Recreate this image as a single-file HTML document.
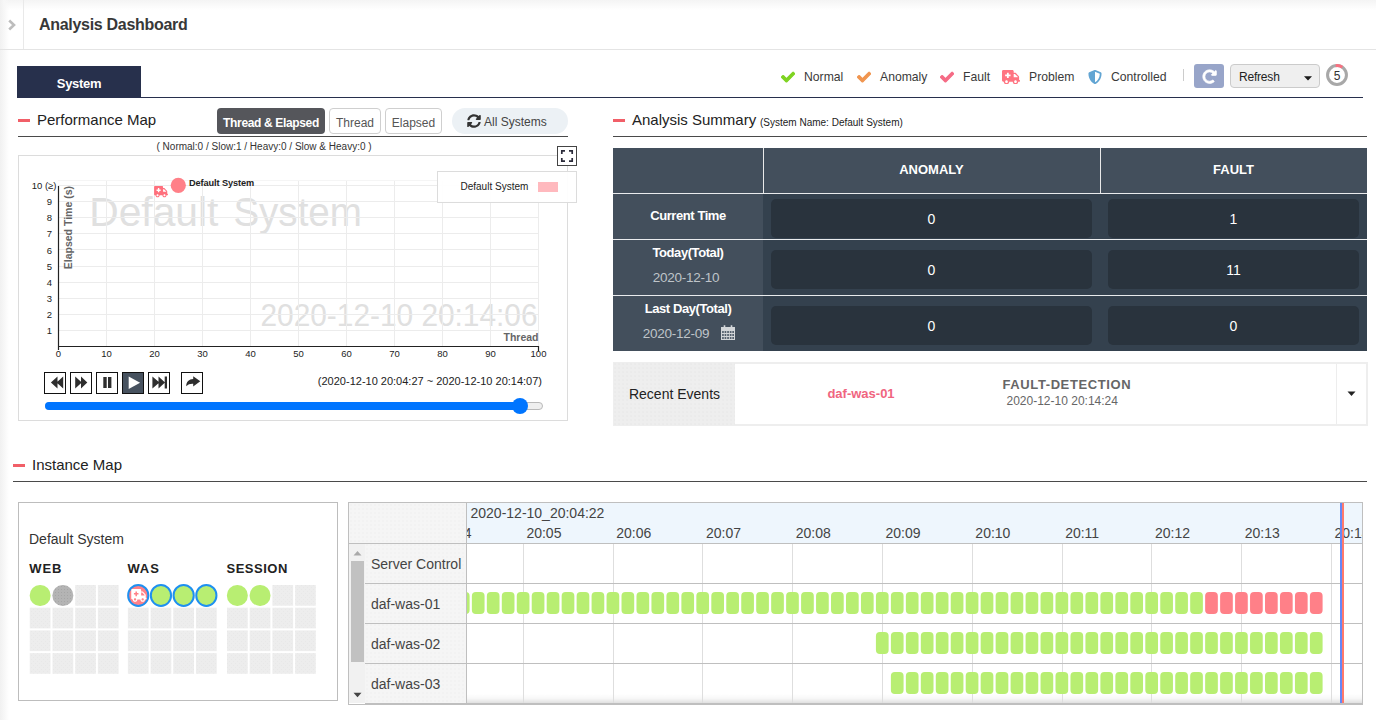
<!DOCTYPE html>
<html lang="en">
<head>
<meta charset="utf-8">
<title>Analysis Dashboard</title>
<style>
*{box-sizing:border-box;margin:0;padding:0}
html,body{width:1376px;height:720px;overflow:hidden;background:#fff}
body{font-family:"Liberation Sans",sans-serif;color:#333;position:relative}
.abs{position:absolute}
.t{position:absolute;white-space:nowrap;line-height:1}
.c{transform:translateX(-50%)}
.r{transform:translateX(-100%)}
/* shadows */
#shTop{left:0;top:0;width:1376px;height:10px;background:linear-gradient(#f4f4f4,#f9f9f9 45%,#fff)}
#shLeft{left:0;top:0;width:9px;height:720px;background:linear-gradient(90deg,#f1f1f1,#f7f7f7 45%,rgba(255,255,255,0))}
#hdrV{left:23px;top:0;width:1px;height:50px;background:#e9e9e9}
#hdrH{left:0;top:49px;width:1376px;height:1px;background:#e4e4e4}
#title{left:39px;top:17.200px;font-size:16px;font-weight:bold;color:#383838;letter-spacing:-0.3px}
/* tab */
#tab{left:17px;top:66px;width:124px;height:32px;background:#27304c;color:#fff;font-weight:bold;font-size:13px;text-align:center;line-height:36px;letter-spacing:-0.3px}
#tabLine{left:17px;top:97px;width:1346px;height:1px;background:#272f4d}
.lg{font-size:12.200px;color:#3a3a3a;top:71px}
/* section titles */
.dash{height:3px;width:12px;background:#f15f68}
.sec{font-size:15px;color:#222}
.hr{height:1px;background:#4a4a4a}
.vb{height:39px;background:#29333d;border-radius:5px}
.vv{font-size:14px;color:#fff}
.rl{font-size:13px;font-weight:bold;color:#fff;letter-spacing:-0.42px;margin-top:-0.5px}
.rd{font-size:13.500px;color:#bfc4c9;letter-spacing:-0.27px;margin-top:-0.5px}
.pb{top:372px;width:22px;height:22px;border:1px solid #111;background:#fff}
</style>
</head>
<body>
<div class="abs" id="shTop"></div>
<div class="abs" id="shLeft"></div>
<div class="abs" id="hdrV"></div>
<div class="abs" id="hdrH"></div>
<svg class="abs" style="left:8px;top:19px" width="9" height="12" viewBox="0 0 9 12"><path d="M1.2 1.5 L6 6 L1.2 10.5" fill="none" stroke="#bdbdbd" stroke-width="2.6"/></svg>
<div class="t" id="title">Analysis Dashboard</div>

<div class="abs" id="tab">System</div>
<div class="abs" id="tabLine"></div>

<!-- status legend -->
<svg class="abs" style="left:780.9px;top:69.900px" width="14.200" height="14.200" viewBox="-20 -20 552 552"><path fill="#7ed321" stroke="#7ed321" stroke-width="40" stroke-linejoin="round" d="M173.898 439.404l-166.400-166.400c-9.997-9.997-9.997-26.206 0-36.204l36.203-36.204c9.997-9.998 26.207-9.998 36.204 0L192 312.690 432.095 72.596c9.997-9.997 26.207-9.997 36.204 0l36.203 36.204c9.997 9.997 9.997 26.206 0 36.204l-294.400 294.401c-9.998 9.997-26.207 9.997-36.204-.001z"/></svg>
<div class="t lg" style="left:804px">Normal</div>
<svg class="abs" style="left:856.9px;top:69.900px" width="14.200" height="14.200" viewBox="-20 -20 552 552"><path fill="#f0954f" stroke="#f0954f" stroke-width="40" stroke-linejoin="round" d="M173.898 439.404l-166.400-166.400c-9.997-9.997-9.997-26.206 0-36.204l36.203-36.204c9.997-9.998 26.207-9.998 36.204 0L192 312.690 432.095 72.596c9.997-9.997 26.207-9.997 36.204 0l36.203 36.204c9.997 9.997 9.997 26.206 0 36.204l-294.400 294.401c-9.998 9.997-26.207 9.997-36.204-.001z"/></svg>
<div class="t lg" style="left:880px">Anomaly</div>
<svg class="abs" style="left:939.9px;top:69.900px" width="14.200" height="14.200" viewBox="-20 -20 552 552"><path fill="#f56b85" stroke="#f56b85" stroke-width="40" stroke-linejoin="round" d="M173.898 439.404l-166.400-166.400c-9.997-9.997-9.997-26.206 0-36.204l36.203-36.204c9.997-9.998 26.207-9.998 36.204 0L192 312.690 432.095 72.596c9.997-9.997 26.207-9.997 36.204 0l36.203 36.204c9.997 9.997 9.997 26.206 0 36.204l-294.400 294.401c-9.998 9.997-26.207 9.997-36.204-.001z"/></svg>
<div class="t lg" style="left:963px">Fault</div>
<svg class="abs" style="left:1001.5px;top:70px" width="18" height="14.400" viewBox="0 0 640 512"><path fill="#ff7481" d="M624 352h-16V243.900c0-12.700-5.100-24.900-14.100-33.900L494 110.100c-9-9-21.200-14.100-33.900-14.100H416V48c0-26.500-21.500-48-48-48H48C21.500 0 0 21.500 0 48v320c0 26.500 21.500 48 48 48h16c0 53 43 96 96 96s96-43 96-96h128c0 53 43 96 96 96s96-43 96-96h48c8.800 0 16-7.200 16-16v-32c0-8.800-7.200-16-16-16zM160 464c-26.500 0-48-21.500-48-48s21.500-48 48-48 48 21.500 48 48-21.500 48-48 48zm144-248c0 4.400-3.600 8-8 8h-56v56c0 4.400-3.600 8-8 8h-48c-4.400 0-8-3.600-8-8v-56h-56c-4.400 0-8-3.600-8-8v-48c0-4.400 3.600-8 8-8h56v-56c0-4.400 3.600-8 8-8h48c4.400 0 8 3.600 8 8v56h56c4.400 0 8 3.600 8 8v48zm176 248c-26.500 0-48-21.500-48-48s21.500-48 48-48 48 21.500 48 48-21.500 48-48 48zm80-208H416V144h44.100l99.900 99.900V256z"/></svg>
<div class="t lg" style="left:1029px">Problem</div>
<svg class="abs" style="left:1087.5px;top:70px" width="14" height="14" viewBox="0 0 512 512"><path fill="#62a5d3" d="M466.500 83.700l-192-80a48.150 48.150 0 0 0-36.900 0l-192 80C27.700 91.100 16 108.600 16 128c0 198.500 114.500 335.700 221.500 380.300 11.800 4.900 25.100 4.900 36.900 0C360.100 472.600 496 349.300 496 128c0-19.400-11.700-36.900-29.500-44.300zM256.100 446.300l-.1-381 175.900 73.300c-3.300 151.400-82.100 261.100-175.800 307.700z"/></svg>
<div class="t lg" style="left:1111px">Controlled</div>
<div class="abs" style="left:1183px;top:69px;width:1px;height:12px;background:#ccc"></div>
<div class="abs" style="left:1194px;top:64px;width:30px;height:24px;background:#98a5c9;border-radius:3px"></div>
<svg class="abs" style="left:1201.500px;top:69.300px" width="15.200" height="15.200" viewBox="-20 -20 552 552"><path fill="#fff" stroke="#fff" stroke-width="24" stroke-linejoin="round" d="M256.455 8c66.269.119 126.437 26.233 170.859 68.685l35.715-35.715C478.149 25.851 504 36.559 504 57.941V192c0 13.255-10.745 24-24 24H345.941c-21.382 0-32.090-25.851-16.971-40.971l41.750-41.750c-30.864-28.899-70.801-44.907-113.230-45.273-92.398-.798-170.283 73.977-169.484 169.442C88.764 348.009 162.184 424 256 424c41.127 0 79.997-14.678 110.629-41.556 4.743-4.161 11.906-3.908 16.368.553l39.662 39.662c4.872 4.872 4.631 12.815-.482 17.433C378.202 479.813 319.926 504 256 504 119.034 504 8.001 392.967 8 256.002 7.999 119.193 119.646 7.755 256.455 8z"/></svg>
<div class="abs" style="left:1230px;top:64px;width:90px;height:24px;background:#efefef;border:1px solid #cbcbcb;border-radius:4px"></div>
<div class="t" style="left:1239px;top:70.700px;font-size:12px;color:#222;letter-spacing:-0.2px">Refresh</div>
<svg class="abs" style="left:1304px;top:75.700px" width="8" height="5" viewBox="0 0 8 5"><path d="M0 0.200H8L4 4.500Z" fill="#1a1a1a"/></svg>
<svg class="abs" style="left:1325.100px;top:63px" width="24" height="24" viewBox="0 0 24 24"><circle cx="12" cy="12" r="9.45" fill="#fff" stroke="#a8a8a8" stroke-width="3"/><path d="M10.68 2.64 A9.45 9.45 0 0 1 17.28 4.17" fill="none" stroke="#fa7080" stroke-width="3"/></svg>
<div class="t c" style="left:1337px;top:69.700px;font-size:12px;color:#333">5</div>

<!-- ===== Performance Map ===== -->
<div class="abs dash" style="left:18px;top:119px"></div>
<div class="t sec" style="left:37px;top:112px">Performance Map</div>
<div class="abs" style="left:217px;top:108.300px;width:108px;height:25.300px;background:#55565b;border-radius:4px"></div>
<div class="t c" style="left:271px;top:116.700px;font-size:12px;font-weight:bold;color:#fff;letter-spacing:-0.35px">Thread &amp; Elapsed</div>
<div class="abs" style="left:329px;top:108.300px;width:52px;height:25.300px;background:#fff;border:1px solid #cfcfcf;border-radius:4px"></div>
<div class="t c" style="left:355px;top:116.700px;font-size:12px;color:#555">Thread</div>
<div class="abs" style="left:385px;top:108.300px;width:57px;height:25.300px;background:#fff;border:1px solid #cfcfcf;border-radius:4px"></div>
<div class="t c" style="left:413.500px;top:116.700px;font-size:12px;color:#555">Elapsed</div>
<div class="abs" style="left:452px;top:108px;width:116px;height:26px;background:#ecf1f5;border-radius:13px"></div>
<svg class="abs" style="left:467px;top:114px" width="14" height="14" viewBox="0 0 512 512"><path fill="#333" d="M370.72 133.28C339.458 104.008 298.888 87.962 255.848 88c-77.458.068-144.328 53.178-162.791 126.850-1.344 5.363-6.122 9.150-11.651 9.150H24.103c-7.498 0-13.194-6.807-11.807-14.176C33.933 94.924 134.813 8 256 8c66.448 0 126.791 26.136 171.315 68.685L463.030 40.970C478.149 25.851 504 36.559 504 57.941V192c0 13.255-10.745 24-24 24H345.941c-21.382 0-32.090-25.851-16.971-40.971l41.750-41.749zM32 296h134.059c21.382 0 32.090 25.851 16.971 40.971l-41.750 41.750c31.262 29.273 71.835 45.319 114.876 45.280 77.418-.070 144.315-53.144 162.787-126.849 1.344-5.363 6.122-9.150 11.651-9.150h57.304c7.498 0 13.194 6.807 11.807 14.176C478.067 417.076 377.187 504 256 504c-66.448 0-126.791-26.136-171.315-68.685L48.970 471.030C33.851 486.149 8 475.441 8 454.059V320c0-13.255 10.745-24 24-24z"/></svg>
<div class="t" style="left:484px;top:116px;font-size:12px;color:#444">All Systems</div>
<div class="abs hr" style="left:18px;top:136px;width:550px"></div>
<div class="t" style="left:156.500px;top:141.500px;font-size:10px;color:#333">( Normal:0 / Slow:1 / Heavy:0 / Slow &amp; Heavy:0 )</div>

<div class="abs" style="left:18px;top:155px;width:550px;height:266px;border:1px solid #dcdcdc;background:#fff"></div>

<svg class="abs" style="left:0;top:140px" width="600" height="290" viewBox="0 140 600 290" font-family="Liberation Sans, sans-serif">
 <text x="89.200" y="225.800" font-size="40" fill="#e0e0e0"><tspan textLength="129.200" lengthAdjust="spacingAndGlyphs">Default</tspan> <tspan x="233.400" textLength="128.500" lengthAdjust="spacingAndGlyphs">System</tspan></text>
 <text x="260.500" y="326.300" font-size="32" fill="#e0e0e0" textLength="277" lengthAdjust="spacingAndGlyphs">2020-12-10 20:14:06</text>
 <g stroke="#ececec" stroke-width="1" shape-rendering="crispEdges">
  <path d="M106.5 180V346M154.5 180V346M202.5 180V346M250.5 180V346M298.5 180V346M346.5 180V346M394.5 180V346M442.5 180V346M490.5 180V346M538.5 180V346"/>
  <path stroke="#f5f5f5" d="M58 180.500H538.500"/><path d="M58 185.500H538.500M58 201.500H538.500M58 217.500H538.500M58 233.500H538.500M58 249.500H538.500M58 266.500H538.500M58 282.500H538.500M58 298.500H538.500M58 314.500H538.500M58 330.500H538.500"/>
 </g>
 <g stroke="#222" stroke-width="1.200" fill="none">
  <path d="M58.500 186V350M58 346.500H538.500M538.500 346V351"/>
 </g>
 <g font-size="9.500" fill="#222" text-anchor="end" transform="translate(0 0.200)">
  <text x="56.500" y="189">10 (≥)</text>
  <text x="52" y="205">9</text>
  <text x="52" y="221">8</text>
  <text x="52" y="237">7</text>
  <text x="52" y="253.500">6</text>
  <text x="52" y="269.500">5</text>
  <text x="52" y="285.500">4</text>
  <text x="52" y="301.500">3</text>
  <text x="52" y="318">2</text>
  <text x="52" y="334">1</text>
 </g>
 <g font-size="9.500" fill="#222" text-anchor="middle">
  <text x="58.500" y="357">0</text>
  <text x="106.500" y="357">10</text>
  <text x="154.500" y="357">20</text>
  <text x="202.500" y="357">30</text>
  <text x="250.500" y="357">40</text>
  <text x="298.500" y="357">50</text>
  <text x="346.500" y="357">60</text>
  <text x="394.500" y="357">70</text>
  <text x="442.500" y="357">80</text>
  <text x="490.500" y="357">90</text>
  <text x="538.500" y="357">100</text>
 </g>
 <text transform="translate(71.500 186) rotate(-90)" text-anchor="end" font-size="10.500" font-weight="bold" fill="#666">Elapsed Time (s)</text>
 <text x="538.500" y="340.500" text-anchor="end" font-size="10.500" font-weight="bold" fill="#666">Thread</text>
 <circle cx="178.300" cy="185.300" r="7.600" fill="#ff8088"/>
 <text x="189" y="185.700" font-size="9.200" font-weight="bold" fill="#222" letter-spacing="-0.1">Default System</text>
 <g transform="translate(154.100 186) scale(0.0216 0.0221)"><path fill="#ff6f7c" d="M624 352h-16V243.900c0-12.700-5.100-24.900-14.100-33.900L494 110.100c-9-9-21.200-14.100-33.900-14.100H416V48c0-26.500-21.500-48-48-48H48C21.500 0 0 21.500 0 48v320c0 26.500 21.500 48 48 48h16c0 53 43 96 96 96s96-43 96-96h128c0 53 43 96 96 96s96-43 96-96h48c8.800 0 16-7.200 16-16v-32c0-8.800-7.200-16-16-16zM160 464c-26.500 0-48-21.500-48-48s21.500-48 48-48 48 21.500 48 48-21.500 48-48 48zm144-248c0 4.400-3.600 8-8 8h-56v56c0 4.400-3.600 8-8 8h-48c-4.400 0-8-3.600-8-8v-56h-56c-4.400 0-8-3.600-8-8v-48c0-4.400 3.600-8 8-8h56v-56c0-4.400 3.600-8 8-8h48c4.400 0 8 3.600 8 8v56h56c4.400 0 8 3.600 8 8v48zm176 248c-26.500 0-48-21.500-48-48s21.500-48 48-48 48 21.500 48 48-21.500 48-48 48zm80-208H416V144h44.100l99.900 99.900V256z"/></g>
</svg>

<!-- legend box -->
<div class="abs" style="left:437px;top:171px;width:140px;height:32px;border:1px solid #dcdcdc;background:rgba(255,255,255,0.92)"></div>
<div class="t" style="left:460.500px;top:182px;font-size:10px;color:#222">Default System</div>
<div class="abs" style="left:538px;top:182px;width:20px;height:10px;background:#ffb9be"></div>
<!-- fullscreen -->
<div class="abs" style="left:557px;top:146px;width:20px;height:20px;border:1px solid #444;background:#fff"></div>
<svg class="abs" style="left:557px;top:146px" width="20" height="20" viewBox="0 0 20 20"><path d="M4.800 8V4.800H8M12 4.800H15.200V8M15.200 12V15.200H12M8 15.200H4.800V12" fill="none" stroke="#2b2b3a" stroke-width="1.700"/></svg>

<!-- player buttons -->
<div class="abs pb" style="left:44px"></div>
<div class="abs pb" style="left:70px"></div>
<div class="abs pb" style="left:96px"></div>
<div class="abs pb" style="left:122px;background:#47525f"></div>
<div class="abs pb" style="left:148px"></div>
<div class="abs pb" style="left:181px"></div>
<svg class="abs" style="left:44px;top:372px" width="160" height="22" viewBox="0 0 160 22">
 <g fill="#2e2e2e">
  <path d="M13.500 4.400V16.500L6.900 10.450ZM19.200 4.400V16.500L12.600 10.450Z"/>
  <path d="M31.200 4.400V16.500L37.800 10.450ZM37 4.400V16.500L43.300 10.450Z"/>
  <path d="M59.300 5H62.700V15.900H59.300ZM64 5H67.400V15.900H64Z"/>
  <path d="M108.400 4.400V16.500L115.400 10.450ZM114.500 4.400V16.500L121 10.450ZM120.700 4.400H123V16.500H120.700Z"/>
 </g>
 <path d="M84.700 4.400V17.100L96.100 10.750Z" fill="#fff"/>
 <path fill="#2e2e2e" d="M149.200 4.200L156.300 9.300L149.200 14.400V11.700C146.500 11.500 144 12.200 142.200 14.300C142.200 10 145 7.300 149.200 7.100Z"/>
</svg>
<div class="t r" style="left:542px;top:376px;font-size:11px;color:#222">(2020-12-10 20:04:27 ~ 2020-12-10 20:14:07)</div>
<!-- slider -->
<div class="abs" style="left:45px;top:402px;width:498px;height:8px;border-radius:4px;background:#efefef;border:1px solid #b9b9b9"></div>
<div class="abs" style="left:45px;top:402px;width:477px;height:8px;border-radius:4px;background:#0075ff"></div>
<div class="abs" style="left:511.700px;top:398.400px;width:16px;height:16px;border-radius:8px;background:#0075ff"></div>
<!-- ===== Analysis Summary ===== -->
<div class="abs dash" style="left:613px;top:119px"></div>
<div class="t sec" style="left:632px;top:112px">Analysis Summary</div>
<div class="t" style="left:760px;top:117.500px;font-size:10px;color:#222">(System Name: Default System)</div>
<div class="abs hr" style="left:613px;top:136px;width:754px"></div>

<div class="abs" style="left:613px;top:148px;width:754px;height:203px;background:#34414e"></div>
<!-- header row + first column -->
<div class="abs" style="left:613px;top:148px;width:754px;height:45px;background:#434f5c"></div>
<div class="abs" style="left:613px;top:148px;width:150px;height:203px;background:#434f5c"></div>
<!-- white separators -->
<div class="abs" style="left:763px;top:148px;width:1px;height:45px;background:#e9e9e9"></div>
<div class="abs" style="left:1100px;top:148px;width:1px;height:45px;background:#e9e9e9"></div>
<div class="abs" style="left:613px;top:193px;width:754px;height:1px;background:#e9ebed"></div>
<div class="abs" style="left:613px;top:239px;width:754px;height:1px;background:#e9ebed"></div>
<div class="abs" style="left:613px;top:295px;width:754px;height:1px;background:#e9ebed"></div>
<div class="t c" style="left:931.5px;top:162.500px;font-size:13px;font-weight:bold;color:#fff">ANOMALY</div>
<div class="t c" style="left:1233.5px;top:162.500px;font-size:13px;font-weight:bold;color:#fff">FAULT</div>
<!-- value boxes -->
<div class="abs vb" style="left:771px;top:199px;width:321px"></div>
<div class="abs vb" style="left:1108px;top:199px;width:251px"></div>
<div class="abs vb" style="left:771px;top:250px;width:321px"></div>
<div class="abs vb" style="left:1108px;top:250px;width:251px"></div>
<div class="abs vb" style="left:771px;top:306px;width:321px"></div>
<div class="abs vb" style="left:1108px;top:306px;width:251px"></div>
<div class="t c vv" style="left:931.5px;top:211.500px">0</div>
<div class="t c vv" style="left:1233.5px;top:211.500px">1</div>
<div class="t c vv" style="left:931.5px;top:262.500px">0</div>
<div class="t c vv" style="left:1233.5px;top:262.500px">11</div>
<div class="t c vv" style="left:931.5px;top:318.500px">0</div>
<div class="t c vv" style="left:1233.5px;top:318.500px">0</div>
<!-- row labels -->
<div class="t c rl" style="left:688px;top:209.500px">Current Time</div>
<div class="t c rl" style="left:688px;top:246.500px">Today(Total)</div>
<div class="t c rd" style="left:686px;top:271px">2020-12-10</div>
<div class="t c rl" style="left:688px;top:302.500px">Last Day(Total)</div>
<div class="t c rd" style="left:676px;top:327px">2020-12-09</div>
<svg class="abs" style="left:721px;top:325px" width="14" height="15" viewBox="0 0 14 15"><path fill="#d3d6d9" d="M0 2H14V15H0ZM2.700 0.300H4.300V2.500H2.700ZM9.700 0.300H11.300V2.500H9.700Z"/><path fill="#56626f" d="M1.1 6.1h1.7v2h-1.7ZM1.1 9.1h1.7v2h-1.7ZM1.1 12.1h1.7v2h-1.7ZM3.6 6.1h1.7v2h-1.7ZM3.6 9.1h1.7v2h-1.7ZM3.6 12.1h1.7v2h-1.7ZM6.2 6.1h1.7v2h-1.7ZM6.2 9.1h1.7v2h-1.7ZM6.2 12.1h1.7v2h-1.7ZM8.8 6.1h1.7v2h-1.7ZM8.8 9.1h1.7v2h-1.7ZM8.8 12.1h1.7v2h-1.7ZM11.3 6.1h1.7v2h-1.7ZM11.3 9.1h1.7v2h-1.7ZM11.3 12.1h1.7v2h-1.7Z"/></svg>

<!-- Recent events -->
<div class="abs" style="left:613px;top:362px;width:755px;height:64px;border:2px solid #eee;background:#fff"></div>
<div class="abs" style="left:613px;top:362px;width:122px;height:64px;background-color:#eeeeee;background-image:radial-gradient(circle,#e9e9e9 0.600px,rgba(233,233,233,0) 0.900px);background-size:4px 4px"></div>
<div class="abs" style="left:1336px;top:364px;width:1px;height:60px;background:#ededed"></div>
<div class="t c" style="left:674.5px;top:387px;font-size:14px;color:#222">Recent Events</div>
<div class="t c" style="left:861px;top:386.500px;font-size:13px;font-weight:bold;color:#f0657f">daf-was-01</div>
<div class="t" style="left:1002.5px;top:378px;font-size:13px;font-weight:bold;color:#666;letter-spacing:0.600px">FAULT-DETECTION</div>
<div class="t" style="left:1006.5px;top:395px;font-size:12px;color:#666">2020-12-10 20:14:24</div>
<svg class="abs" style="left:1347px;top:391px" width="9" height="6" viewBox="0 0 9 6"><path d="M0.500 0.500H8.500L4.500 5Z" fill="#222"/></svg>
<!-- ===== Instance Map ===== -->
<div class="abs dash" style="left:13px;top:464px"></div>
<div class="t sec" style="left:32px;top:457px">Instance Map</div>
<div class="abs hr" style="left:13px;top:481px;width:1354px"></div>
<div class="abs" style="left:18px;top:502px;width:320px;height:199px;border:1px solid #bdbdbd;background:#fff"></div>
<div class="t" style="left:29px;top:532px;font-size:14px;color:#333">Default System</div>
<div class="t" style="left:29.3px;top:562.400px;font-size:13px;font-weight:bold;color:#222;letter-spacing:0.9px">WEB</div>
<div class="t" style="left:127.4px;top:562.400px;font-size:13px;font-weight:bold;color:#222;letter-spacing:0.9px">WAS</div>
<div class="t" style="left:226.5px;top:562.400px;font-size:13px;font-weight:bold;color:#222;letter-spacing:0.5px">SESSION</div>
<svg class="abs" style="left:0;top:560px" width="345" height="150" viewBox="0 560 345 150">
<defs><pattern id="dots" width="4" height="4" patternUnits="userSpaceOnUse"><rect width="4" height="4" fill="#ededed"/><rect x="1" y="1" width="1" height="1" fill="#e8e8e8"/><rect x="3" y="3" width="1" height="1" fill="#e8e8e8"/></pattern>
<pattern id="dotsg" width="3" height="3" patternUnits="userSpaceOnUse"><rect width="3" height="3" fill="#b4b4b4"/><rect x="1" y="1" width="1" height="1" fill="#a6a6a6"/></pattern></defs>
<rect x="75.2" y="585" width="20.7" height="20.7" fill="url(#dots)"/>
<rect x="97.9" y="585" width="20.7" height="20.7" fill="url(#dots)"/>
<rect x="29.8" y="607.7" width="20.7" height="20.7" fill="url(#dots)"/>
<rect x="52.5" y="607.7" width="20.7" height="20.7" fill="url(#dots)"/>
<rect x="75.2" y="607.7" width="20.7" height="20.7" fill="url(#dots)"/>
<rect x="97.9" y="607.7" width="20.7" height="20.7" fill="url(#dots)"/>
<rect x="29.8" y="630.4" width="20.7" height="20.7" fill="url(#dots)"/>
<rect x="52.5" y="630.4" width="20.7" height="20.7" fill="url(#dots)"/>
<rect x="75.2" y="630.4" width="20.7" height="20.7" fill="url(#dots)"/>
<rect x="97.9" y="630.4" width="20.7" height="20.7" fill="url(#dots)"/>
<rect x="29.8" y="653.1" width="20.7" height="20.7" fill="url(#dots)"/>
<rect x="52.5" y="653.1" width="20.7" height="20.7" fill="url(#dots)"/>
<rect x="75.2" y="653.1" width="20.7" height="20.7" fill="url(#dots)"/>
<rect x="97.9" y="653.1" width="20.7" height="20.7" fill="url(#dots)"/>
<rect x="127.9" y="607.7" width="20.7" height="20.7" fill="url(#dots)"/>
<rect x="150.6" y="607.7" width="20.7" height="20.7" fill="url(#dots)"/>
<rect x="173.3" y="607.7" width="20.7" height="20.7" fill="url(#dots)"/>
<rect x="196" y="607.7" width="20.7" height="20.7" fill="url(#dots)"/>
<rect x="127.9" y="630.4" width="20.7" height="20.7" fill="url(#dots)"/>
<rect x="150.6" y="630.4" width="20.7" height="20.7" fill="url(#dots)"/>
<rect x="173.3" y="630.4" width="20.7" height="20.7" fill="url(#dots)"/>
<rect x="196" y="630.4" width="20.7" height="20.7" fill="url(#dots)"/>
<rect x="127.9" y="653.1" width="20.7" height="20.7" fill="url(#dots)"/>
<rect x="150.6" y="653.1" width="20.7" height="20.7" fill="url(#dots)"/>
<rect x="173.3" y="653.1" width="20.7" height="20.7" fill="url(#dots)"/>
<rect x="196" y="653.1" width="20.7" height="20.7" fill="url(#dots)"/>
<rect x="272.4" y="585" width="20.7" height="20.7" fill="url(#dots)"/>
<rect x="295.1" y="585" width="20.7" height="20.7" fill="url(#dots)"/>
<rect x="227" y="607.7" width="20.7" height="20.7" fill="url(#dots)"/>
<rect x="249.7" y="607.7" width="20.7" height="20.7" fill="url(#dots)"/>
<rect x="272.4" y="607.7" width="20.7" height="20.7" fill="url(#dots)"/>
<rect x="295.1" y="607.7" width="20.7" height="20.7" fill="url(#dots)"/>
<rect x="227" y="630.4" width="20.7" height="20.7" fill="url(#dots)"/>
<rect x="249.7" y="630.4" width="20.7" height="20.7" fill="url(#dots)"/>
<rect x="272.4" y="630.4" width="20.7" height="20.7" fill="url(#dots)"/>
<rect x="295.1" y="630.4" width="20.7" height="20.7" fill="url(#dots)"/>
<rect x="227" y="653.1" width="20.7" height="20.7" fill="url(#dots)"/>
<rect x="249.7" y="653.1" width="20.7" height="20.7" fill="url(#dots)"/>
<rect x="272.4" y="653.1" width="20.7" height="20.7" fill="url(#dots)"/>
<rect x="295.1" y="653.1" width="20.7" height="20.7" fill="url(#dots)"/>
<rect x="29.7" y="585" width="20.9" height="20.9" rx="10.2" fill="#b8ee72"/>
<rect x="52.4" y="585" width="20.9" height="20.9" rx="10.2" fill="url(#dotsg)"/>
<rect x="128.15" y="585" width="20.2" height="20.9" rx="10.1" ry="10.4" fill="#ff8088" stroke="#1e90f0" stroke-width="2"/>
<rect x="150.85" y="585" width="20.2" height="20.9" rx="10.1" ry="10.4" fill="#b8ee72" stroke="#1e90f0" stroke-width="2"/>
<rect x="173.55" y="585" width="20.2" height="20.9" rx="10.1" ry="10.4" fill="#b8ee72" stroke="#1e90f0" stroke-width="2"/>
<rect x="196.25" y="585" width="20.2" height="20.9" rx="10.1" ry="10.4" fill="#b8ee72" stroke="#1e90f0" stroke-width="2"/>
<rect x="226.9" y="585" width="20.9" height="20.9" rx="10.2" fill="#b8ee72"/>
<rect x="249.6" y="585" width="20.9" height="20.9" rx="10.2" fill="#b8ee72"/>
<g transform="translate(131.250 589) scale(0.0238 0.0250)"><path fill="#fff" d="M624 352h-16V243.900c0-12.700-5.100-24.900-14.100-33.900L494 110.100c-9-9-21.200-14.100-33.900-14.100H416V48c0-26.500-21.500-48-48-48H48C21.500 0 0 21.500 0 48v320c0 26.500 21.500 48 48 48h16c0 53 43 96 96 96s96-43 96-96h128c0 53 43 96 96 96s96-43 96-96h48c8.800 0 16-7.200 16-16v-32c0-8.800-7.200-16-16-16zM160 464c-26.500 0-48-21.500-48-48s21.500-48 48-48 48 21.500 48 48-21.500 48-48 48zm144-248c0 4.400-3.600 8-8 8h-56v56c0 4.400-3.600 8-8 8h-48c-4.400 0-8-3.600-8-8v-56h-56c-4.400 0-8-3.600-8-8v-48c0-4.400 3.600-8 8-8h56v-56c0-4.400 3.600-8 8-8h48c4.400 0 8 3.600 8 8v56h56c4.400 0 8 3.600 8 8v48zm176 248c-26.500 0-48-21.500-48-48s21.500-48 48-48 48 21.500 48 48-21.500 48-48 48zm80-208H416V144h44.100l99.900 99.900V256z"/></g>
</svg>
<div class="abs" style="left:348px;top:502px;width:1015px;height:203px;border:1px solid #bfbfbf;background:#fff"></div>
<div class="abs" style="left:349px;top:503px;width:118px;height:200px;background-color:#f5f5f5;background-image:radial-gradient(circle,#f1f1f1 0.600px,rgba(241,241,241,0) 0.900px);background-size:4px 4px"></div>
<div class="abs" style="left:467px;top:503px;width:895px;height:40px;background:#eef6fd"></div>
<div class="abs" style="left:467px;top:694px;width:895px;height:9px;background:linear-gradient(rgba(0,0,0,0),rgba(0,0,0,0.030) 50%,rgba(0,0,0,0.120))"></div>
<svg class="abs" style="left:340px;top:495px" width="1030" height="215" viewBox="340 495 1030 215" font-family="Liberation Sans, sans-serif">
<g stroke="#dedede" stroke-width="1" shape-rendering="crispEdges">
<path d="M523.5 543V703M613.5 543V703M702.5 543V703M792.5 543V703M882.5 543V703M972.5 543V703M1062.5 543V703M1151.5 543V703M1241.5 543V703M1331.5 543V703"/>
</g>
<g stroke="#bfbfbf" stroke-width="1" shape-rendering="crispEdges">
<path d="M349 543.500H1362M365 583.500H1362M365 623.500H1362M365 663.500H1362M365 703.500H1362M466.500 503V703"/>
</g>
<rect x="1309.9" y="592" width="12.7" height="22" rx="4" fill="#ff8088"/>
<rect x="1294.94" y="592" width="12.7" height="22" rx="4" fill="#ff8088"/>
<rect x="1279.97" y="592" width="12.7" height="22" rx="4" fill="#ff8088"/>
<rect x="1265.01" y="592" width="12.7" height="22" rx="4" fill="#ff8088"/>
<rect x="1250.04" y="592" width="12.7" height="22" rx="4" fill="#ff8088"/>
<rect x="1235.08" y="592" width="12.7" height="22" rx="4" fill="#ff8088"/>
<rect x="1220.11" y="592" width="12.7" height="22" rx="4" fill="#ff8088"/>
<rect x="1205.14" y="592" width="12.7" height="22" rx="4" fill="#ff8088"/>
<rect x="1190.18" y="592" width="12.7" height="22" rx="4" fill="#b8ee72"/>
<rect x="1175.22" y="592" width="12.7" height="22" rx="4" fill="#b8ee72"/>
<rect x="1160.25" y="592" width="12.7" height="22" rx="4" fill="#b8ee72"/>
<rect x="1145.29" y="592" width="12.7" height="22" rx="4" fill="#b8ee72"/>
<rect x="1130.32" y="592" width="12.7" height="22" rx="4" fill="#b8ee72"/>
<rect x="1115.36" y="592" width="12.7" height="22" rx="4" fill="#b8ee72"/>
<rect x="1100.39" y="592" width="12.7" height="22" rx="4" fill="#b8ee72"/>
<rect x="1085.43" y="592" width="12.7" height="22" rx="4" fill="#b8ee72"/>
<rect x="1070.46" y="592" width="12.7" height="22" rx="4" fill="#b8ee72"/>
<rect x="1055.5" y="592" width="12.7" height="22" rx="4" fill="#b8ee72"/>
<rect x="1040.53" y="592" width="12.7" height="22" rx="4" fill="#b8ee72"/>
<rect x="1025.57" y="592" width="12.7" height="22" rx="4" fill="#b8ee72"/>
<rect x="1010.6" y="592" width="12.7" height="22" rx="4" fill="#b8ee72"/>
<rect x="995.64" y="592" width="12.7" height="22" rx="4" fill="#b8ee72"/>
<rect x="980.67" y="592" width="12.7" height="22" rx="4" fill="#b8ee72"/>
<rect x="965.71" y="592" width="12.7" height="22" rx="4" fill="#b8ee72"/>
<rect x="950.74" y="592" width="12.7" height="22" rx="4" fill="#b8ee72"/>
<rect x="935.78" y="592" width="12.7" height="22" rx="4" fill="#b8ee72"/>
<rect x="920.81" y="592" width="12.7" height="22" rx="4" fill="#b8ee72"/>
<rect x="905.85" y="592" width="12.7" height="22" rx="4" fill="#b8ee72"/>
<rect x="890.88" y="592" width="12.7" height="22" rx="4" fill="#b8ee72"/>
<rect x="875.92" y="592" width="12.7" height="22" rx="4" fill="#b8ee72"/>
<rect x="860.95" y="592" width="12.7" height="22" rx="4" fill="#b8ee72"/>
<rect x="845.99" y="592" width="12.7" height="22" rx="4" fill="#b8ee72"/>
<rect x="831.02" y="592" width="12.7" height="22" rx="4" fill="#b8ee72"/>
<rect x="816.06" y="592" width="12.7" height="22" rx="4" fill="#b8ee72"/>
<rect x="801.09" y="592" width="12.7" height="22" rx="4" fill="#b8ee72"/>
<rect x="786.13" y="592" width="12.7" height="22" rx="4" fill="#b8ee72"/>
<rect x="771.16" y="592" width="12.7" height="22" rx="4" fill="#b8ee72"/>
<rect x="756.2" y="592" width="12.7" height="22" rx="4" fill="#b8ee72"/>
<rect x="741.23" y="592" width="12.7" height="22" rx="4" fill="#b8ee72"/>
<rect x="726.27" y="592" width="12.7" height="22" rx="4" fill="#b8ee72"/>
<rect x="711.3" y="592" width="12.7" height="22" rx="4" fill="#b8ee72"/>
<rect x="696.34" y="592" width="12.7" height="22" rx="4" fill="#b8ee72"/>
<rect x="681.37" y="592" width="12.7" height="22" rx="4" fill="#b8ee72"/>
<rect x="666.41" y="592" width="12.7" height="22" rx="4" fill="#b8ee72"/>
<rect x="651.44" y="592" width="12.7" height="22" rx="4" fill="#b8ee72"/>
<rect x="636.48" y="592" width="12.7" height="22" rx="4" fill="#b8ee72"/>
<rect x="621.51" y="592" width="12.7" height="22" rx="4" fill="#b8ee72"/>
<rect x="606.55" y="592" width="12.7" height="22" rx="4" fill="#b8ee72"/>
<rect x="591.58" y="592" width="12.7" height="22" rx="4" fill="#b8ee72"/>
<rect x="576.62" y="592" width="12.7" height="22" rx="4" fill="#b8ee72"/>
<rect x="561.65" y="592" width="12.7" height="22" rx="4" fill="#b8ee72"/>
<rect x="546.69" y="592" width="12.7" height="22" rx="4" fill="#b8ee72"/>
<rect x="531.72" y="592" width="12.7" height="22" rx="4" fill="#b8ee72"/>
<rect x="516.76" y="592" width="12.7" height="22" rx="4" fill="#b8ee72"/>
<rect x="501.79" y="592" width="12.7" height="22" rx="4" fill="#b8ee72"/>
<rect x="486.83" y="592" width="12.7" height="22" rx="4" fill="#b8ee72"/>
<rect x="471.86" y="592" width="12.7" height="22" rx="4" fill="#b8ee72"/>
<path d="M467 592H465.6a4 4 0 0 1 4 4V610a4 4 0 0 1 -4 4H467Z" fill="#b8ee72"/>
<rect x="1309.9" y="632" width="12.7" height="22" rx="4" fill="#b8ee72"/>
<rect x="1294.94" y="632" width="12.7" height="22" rx="4" fill="#b8ee72"/>
<rect x="1279.97" y="632" width="12.7" height="22" rx="4" fill="#b8ee72"/>
<rect x="1265.01" y="632" width="12.7" height="22" rx="4" fill="#b8ee72"/>
<rect x="1250.04" y="632" width="12.7" height="22" rx="4" fill="#b8ee72"/>
<rect x="1235.08" y="632" width="12.7" height="22" rx="4" fill="#b8ee72"/>
<rect x="1220.11" y="632" width="12.7" height="22" rx="4" fill="#b8ee72"/>
<rect x="1205.14" y="632" width="12.7" height="22" rx="4" fill="#b8ee72"/>
<rect x="1190.18" y="632" width="12.7" height="22" rx="4" fill="#b8ee72"/>
<rect x="1175.22" y="632" width="12.7" height="22" rx="4" fill="#b8ee72"/>
<rect x="1160.25" y="632" width="12.7" height="22" rx="4" fill="#b8ee72"/>
<rect x="1145.29" y="632" width="12.7" height="22" rx="4" fill="#b8ee72"/>
<rect x="1130.32" y="632" width="12.7" height="22" rx="4" fill="#b8ee72"/>
<rect x="1115.36" y="632" width="12.7" height="22" rx="4" fill="#b8ee72"/>
<rect x="1100.39" y="632" width="12.7" height="22" rx="4" fill="#b8ee72"/>
<rect x="1085.43" y="632" width="12.7" height="22" rx="4" fill="#b8ee72"/>
<rect x="1070.46" y="632" width="12.7" height="22" rx="4" fill="#b8ee72"/>
<rect x="1055.5" y="632" width="12.7" height="22" rx="4" fill="#b8ee72"/>
<rect x="1040.53" y="632" width="12.7" height="22" rx="4" fill="#b8ee72"/>
<rect x="1025.57" y="632" width="12.7" height="22" rx="4" fill="#b8ee72"/>
<rect x="1010.6" y="632" width="12.7" height="22" rx="4" fill="#b8ee72"/>
<rect x="995.64" y="632" width="12.7" height="22" rx="4" fill="#b8ee72"/>
<rect x="980.67" y="632" width="12.7" height="22" rx="4" fill="#b8ee72"/>
<rect x="965.71" y="632" width="12.7" height="22" rx="4" fill="#b8ee72"/>
<rect x="950.74" y="632" width="12.7" height="22" rx="4" fill="#b8ee72"/>
<rect x="935.78" y="632" width="12.7" height="22" rx="4" fill="#b8ee72"/>
<rect x="920.81" y="632" width="12.7" height="22" rx="4" fill="#b8ee72"/>
<rect x="905.85" y="632" width="12.7" height="22" rx="4" fill="#b8ee72"/>
<rect x="890.88" y="632" width="12.7" height="22" rx="4" fill="#b8ee72"/>
<rect x="875.92" y="632" width="12.7" height="22" rx="4" fill="#b8ee72"/>
<rect x="1309.9" y="672" width="12.7" height="22" rx="4" fill="#b8ee72"/>
<rect x="1294.94" y="672" width="12.7" height="22" rx="4" fill="#b8ee72"/>
<rect x="1279.97" y="672" width="12.7" height="22" rx="4" fill="#b8ee72"/>
<rect x="1265.01" y="672" width="12.7" height="22" rx="4" fill="#b8ee72"/>
<rect x="1250.04" y="672" width="12.7" height="22" rx="4" fill="#b8ee72"/>
<rect x="1235.08" y="672" width="12.7" height="22" rx="4" fill="#b8ee72"/>
<rect x="1220.11" y="672" width="12.7" height="22" rx="4" fill="#b8ee72"/>
<rect x="1205.14" y="672" width="12.7" height="22" rx="4" fill="#b8ee72"/>
<rect x="1190.18" y="672" width="12.7" height="22" rx="4" fill="#b8ee72"/>
<rect x="1175.22" y="672" width="12.7" height="22" rx="4" fill="#b8ee72"/>
<rect x="1160.25" y="672" width="12.7" height="22" rx="4" fill="#b8ee72"/>
<rect x="1145.29" y="672" width="12.7" height="22" rx="4" fill="#b8ee72"/>
<rect x="1130.32" y="672" width="12.7" height="22" rx="4" fill="#b8ee72"/>
<rect x="1115.36" y="672" width="12.7" height="22" rx="4" fill="#b8ee72"/>
<rect x="1100.39" y="672" width="12.7" height="22" rx="4" fill="#b8ee72"/>
<rect x="1085.43" y="672" width="12.7" height="22" rx="4" fill="#b8ee72"/>
<rect x="1070.46" y="672" width="12.7" height="22" rx="4" fill="#b8ee72"/>
<rect x="1055.5" y="672" width="12.7" height="22" rx="4" fill="#b8ee72"/>
<rect x="1040.53" y="672" width="12.7" height="22" rx="4" fill="#b8ee72"/>
<rect x="1025.57" y="672" width="12.7" height="22" rx="4" fill="#b8ee72"/>
<rect x="1010.6" y="672" width="12.7" height="22" rx="4" fill="#b8ee72"/>
<rect x="995.64" y="672" width="12.7" height="22" rx="4" fill="#b8ee72"/>
<rect x="980.67" y="672" width="12.7" height="22" rx="4" fill="#b8ee72"/>
<rect x="965.71" y="672" width="12.7" height="22" rx="4" fill="#b8ee72"/>
<rect x="950.74" y="672" width="12.7" height="22" rx="4" fill="#b8ee72"/>
<rect x="935.78" y="672" width="12.7" height="22" rx="4" fill="#b8ee72"/>
<rect x="920.81" y="672" width="12.7" height="22" rx="4" fill="#b8ee72"/>
<rect x="905.85" y="672" width="12.7" height="22" rx="4" fill="#b8ee72"/>
<rect x="890.88" y="672" width="12.7" height="22" rx="4" fill="#b8ee72"/>
<g font-size="14" fill="#444">
<text x="470.500" y="517.800">2020-12-10_20:04:22</text>
<text x="526.4" y="537.600">20:05</text>
<text x="616.19" y="537.600">20:06</text>
<text x="705.98" y="537.600">20:07</text>
<text x="795.77" y="537.600">20:08</text>
<text x="885.56" y="537.600">20:09</text>
<text x="975.35" y="537.600">20:10</text>
<text x="1065.14" y="537.600">20:11</text>
<text x="1154.93" y="537.600">20:12</text>
<text x="1244.72" y="537.600">20:13</text>
<clipPath id="cl1"><rect x="467" y="520" width="895" height="24"/></clipPath>
<g clip-path="url(#cl1)"><text x="436.61" y="537.600">20:04</text><text x="1334.51" y="537.600">20:14</text></g>
</g>
<g font-size="14" fill="#444">
<text x="371" y="569">Server Control</text>
<text x="371" y="609">daf-was-01</text>
<text x="371" y="649">daf-was-02</text>
<text x="371" y="689">daf-was-03</text>
</g>
<rect x="349" y="544" width="16" height="159" fill="#f1f1f1"/>
<rect x="351" y="561" width="13" height="101" fill="#c1c1c1"/>
<path d="M353.500 555.500L357.500 551L361.500 555.500Z" fill="#a9a9a9"/>
<path d="M353.500 692.800L361.500 692.800L357.500 697.300Z" fill="#444"/>
<rect x="1340" y="503" width="2" height="200" fill="#6688f6"/>
<rect x="1342" y="503" width="2" height="200" fill="#ff7a6c"/>
</svg>
</body>
</html>
